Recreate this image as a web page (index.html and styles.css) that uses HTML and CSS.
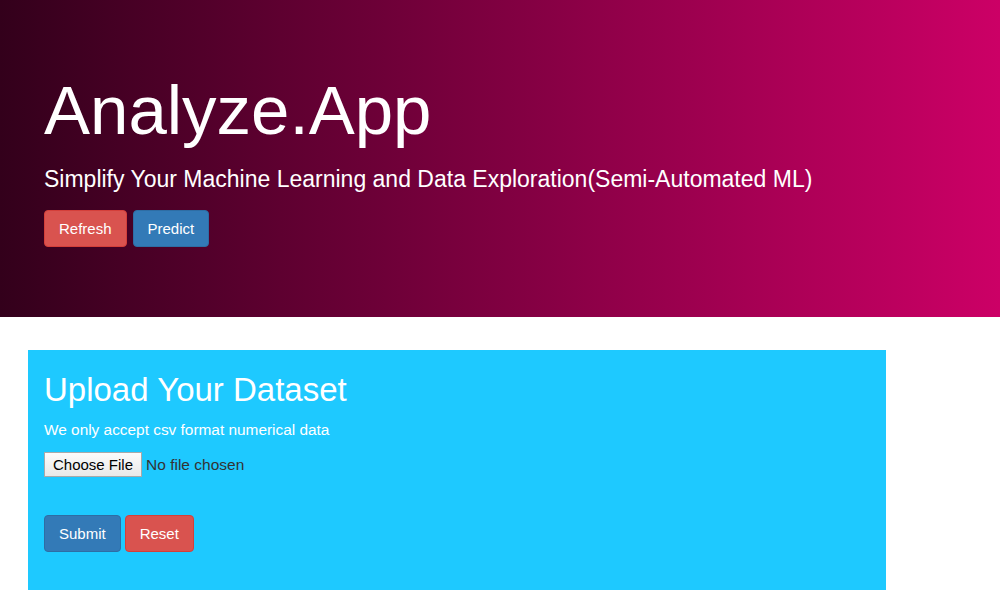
FILE: index.html
```html
<!DOCTYPE html>
<html lang="en">
<head>
<meta charset="utf-8">
<title>Analyze.App</title>
<link rel="stylesheet" href="styles.css">
</head>
<body>
<header class="hero">
  <h1 class="hero-title">Analyze.App</h1>
  <p class="hero-sub">Simplify Your Machine Learning and Data Exploration(Semi-Automated ML)</p>
  <div class="btn-row">
    <button class="btn btn-danger">Refresh</button>
    <button class="btn btn-primary">Predict</button>
  </div>
</header>
<main class="main">
  <section class="upload">
    <h2 class="upload-title">Upload Your Dataset</h2>
    <p class="upload-note">We only accept csv format numerical data</p>
    <input class="file" type="file">
    <div class="btn-row btn-row-tight">
      <button class="btn btn-primary">Submit</button>
      <button class="btn btn-danger">Reset</button>
    </div>
  </section>
</main>
</body>
</html>
```

FILE: styles.css
```css
html, body {
  margin: 0;
  padding: 0;
  background: #ffffff;
  font-family: "Liberation Sans", Arial, sans-serif;
}

.hero {
  background: linear-gradient(to right, #33001b, #cc0066);
  color: #ffffff;
  padding: 73px 44px 70px;
}

.hero-title {
  margin: 0 0 14px;
  font-size: 69px;
  font-weight: 400;
  line-height: 1.1;
}

.hero-sub {
  margin: 0 0 15px;
  font-size: 23px;
  line-height: 1.4;
}

.btn-row {
  display: flex;
  gap: 6px;
}

.btn-row-tight {
  gap: 4px;
  margin-top: 38px;
}

.btn {
  box-sizing: border-box;
  height: 37px;
  padding: 0 14px;
  font-family: "Liberation Sans", Arial, sans-serif;
  font-size: 15px;
  color: #ffffff;
  border: 1px solid transparent;
  border-radius: 4px;
  cursor: pointer;
}

.btn-danger {
  background: #d9534f;
  border-color: #d43f3a;
}

.btn-primary {
  background: #337ab7;
  border-color: #2e6da4;
}

.main {
  padding: 33px 0 18px 28px;
}

.upload {
  width: 858px;
  box-sizing: border-box;
  background: #1ec9ff;
  color: #ffffff;
  padding: 22px 16px 38px;
}

.upload-title {
  margin: 0 0 11px;
  font-size: 33px;
  font-weight: 400;
  line-height: 1.1;
}

.upload-note {
  margin: 0 0 11px;
  font-size: 15.4px;
  line-height: 22px;
}

.file {
  display: block;
  font-family: "Liberation Sans", Arial, sans-serif;
  font-size: 15.5px;
  color: #333333;
  height: 25px;
}

.file::file-selector-button {
  font-family: "Liberation Sans", Arial, sans-serif;
  font-size: 15px;
  color: #000000;
  height: 25px;
  padding: 0 8px;
  margin-right: 4px;
  background: linear-gradient(#fbfbfb, #e9e9e9);
  border: 1px solid #a9a9a9;
  border-radius: 0;
}
```
